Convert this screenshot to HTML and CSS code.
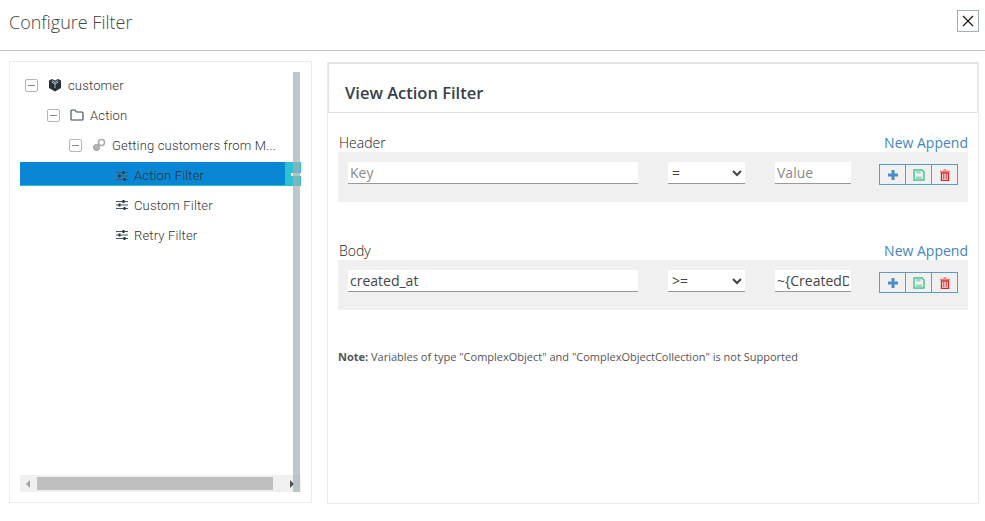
FILE: index.html
```html
<!DOCTYPE html>
<html>
  <head>
    <title>Configure Filter</title>
    <link rel="stylesheet" href="styles.css">
  </head>
  <body>
    <div class="modal-header">
      <h1>Configure Filter</h1>
      <button class="close-btn" type="button" aria-label="Close">
        <svg width="12" height="12" viewBox="0 0 12 12"><path d="M1 1l10 10M11 1L1 11" stroke="#222" stroke-width="1.400" fill="none"/></svg>
      </button>
    </div>

    <div class="modal-body">
      <div class="tree-panel">
        <div class="tree">
          <div class="tree-row level-0">
            <span class="toggle"></span>
            <svg class="node-icon" width="14" height="14" viewBox="0 0 14 14"><path d="M1 2.500L4 1l3 1.500L10 1l3 1.500V10l-6 3.500L1 10z" fill="#263238"/><path d="M3.500 4L7 6l3.500-2M7 6v4M4 2.500L7 4.500l3-2" stroke="#cfd8dc" stroke-width=".8" fill="none"/></svg>
            <span class="node-label">customer</span>
          </div>
          <div class="tree-row level-1">
            <span class="toggle"></span>
            <svg class="node-icon" width="14" height="14" viewBox="0 0 14 14"><path d="M1 11.500V3a1 1 0 0 1 1-1h3l1.500 2H12a1 1 0 0 1 1 1v6.500a.5.5 0 0 1-.5.5h-11a.5.5 0 0 1-.5-.5z" fill="none" stroke="#37474f" stroke-width="1.100"/></svg>
            <span class="node-label">Action</span>
          </div>
          <div class="tree-row level-2">
            <span class="toggle"></span>
            <svg class="node-icon" width="14" height="14" viewBox="0 0 14 14"><circle cx="9.500" cy="4.500" r="3" fill="none" stroke="#aaa" stroke-width="1.500"/><circle cx="4.500" cy="9.500" r="3" fill="#b5b5b5" stroke="#999" stroke-width="1"/></svg>
            <span class="node-label">Getting customers from M...</span>
          </div>
          <div class="tree-row level-3 selected">
            <svg class="node-icon" width="12" height="10" viewBox="0 0 12 10"><path d="M0 1.500h12M0 5h12M0 8.500h12" stroke="#455a64" stroke-width="1.200"/><path d="M7.500 0v3M3.500 3.500v3M8.500 7v3" stroke="#263238" stroke-width="2"/></svg>
            <span class="node-label">Action Filter</span>
          </div>
          <div class="tree-row level-3">
            <svg class="node-icon" width="12" height="10" viewBox="0 0 12 10"><path d="M0 1.500h12M0 5h12M0 8.500h12" stroke="#455a64" stroke-width="1.200"/><path d="M7.500 0v3M3.500 3.500v3M8.500 7v3" stroke="#263238" stroke-width="2"/></svg>
            <span class="node-label">Custom Filter</span>
          </div>
          <div class="tree-row level-3">
            <svg class="node-icon" width="12" height="10" viewBox="0 0 12 10"><path d="M0 1.500h12M0 5h12M0 8.500h12" stroke="#455a64" stroke-width="1.200"/><path d="M7.500 0v3M3.500 3.500v3M8.500 7v3" stroke="#263238" stroke-width="2"/></svg>
            <span class="node-label">Retry Filter</span>
          </div>
        </div>

        <div class="resize-handle"><span></span></div>
        <div class="hscroll">
          <span class="arrow arrow-left"></span>
          <div class="hscroll-thumb"></div>
          <span class="arrow arrow-right"></span>
        </div>
        <div class="vscroll"></div>
      </div>

      <div class="detail-panel">
        <div class="detail-title"><h2>View Action Filter</h2></div>

        <div class="filter-section">
          <div class="section-head">
            <span class="section-name">Header</span>
            <a class="append-link" href="#">New Append</a>
          </div>
          <div class="filter-row">
            <input class="key-input" type="text" placeholder="Key" />
            <select class="op-select"><option>=</option></select>
            <input class="value-input" type="text" placeholder="Value" />
            <div class="btn-group">
              <button type="button" aria-label="Add"><svg width="12" height="12" viewBox="0 0 12 12"><path d="M6 1v10M1 6h10" stroke="#4a8cc7" stroke-width="3"/></svg></button>
              <button type="button" aria-label="Save"><svg width="12" height="12" viewBox="0 0 12 12"><path d="M1 1h8l2 2v8H1z" fill="none" stroke="#3fbf8f" stroke-width="1.400"/><path d="M3.500 1.500h4v3h-4zM3 7.500h6v3H3z" fill="#8fdcc0"/></svg></button>
              <button type="button" aria-label="Delete"><svg width="12" height="12" viewBox="0 0 12 12"><path d="M1 2.500h10" stroke="#e58080" stroke-width="1.500"/><path d="M4.500 1h3" stroke="#e58080" stroke-width="1.500"/><path d="M2.500 4h7v7.500h-7z" fill="none" stroke="#d9242b" stroke-width="1.400"/><path d="M4.800 5v5M7.200 5v5" stroke="#d9242b" stroke-width="1"/></svg></button>
            </div>
          </div>
        </div>

        <div class="filter-section">
          <div class="section-head">
            <span class="section-name">Body</span>
            <a class="append-link" href="#">New Append</a>
          </div>
          <div class="filter-row">
            <input class="key-input" type="text" value="created_at" />
            <select class="op-select"><option>&gt;=</option></select>
            <input class="value-input" type="text" value="~{CreatedDate}" />
            <div class="btn-group">
              <button type="button" aria-label="Add"><svg width="12" height="12" viewBox="0 0 12 12"><path d="M6 1v10M1 6h10" stroke="#4a8cc7" stroke-width="3"/></svg></button>
              <button type="button" aria-label="Save"><svg width="12" height="12" viewBox="0 0 12 12"><path d="M1 1h8l2 2v8H1z" fill="none" stroke="#3fbf8f" stroke-width="1.400"/><path d="M3.500 1.500h4v3h-4zM3 7.500h6v3H3z" fill="#8fdcc0"/></svg></button>
              <button type="button" aria-label="Delete"><svg width="12" height="12" viewBox="0 0 12 12"><path d="M1 2.500h10" stroke="#e58080" stroke-width="1.500"/><path d="M4.500 1h3" stroke="#e58080" stroke-width="1.500"/><path d="M2.500 4h7v7.500h-7z" fill="none" stroke="#d9242b" stroke-width="1.400"/><path d="M4.800 5v5M7.200 5v5" stroke="#d9242b" stroke-width="1"/></svg></button>
            </div>
          </div>
        </div>

        <p class="note"><b>Note:</b> Variables of type "ComplexObject" and "ComplexObjectCollection" is not Supported</p>
      </div>
    </div>
  </body>
</html>
```

FILE: styles.css
```css
html,
body {
  height: 100%;
}
body {
  margin: 0;
  background: #fff;
  font-family: "Open Sans", sans-serif;
  color: #333;
  overflow: hidden;
}
.modal-header {
  height: 51px;
  box-sizing: border-box;
  border-bottom: 1px solid #c4c4c4;
  padding: 10px 6px 0 9px;
  display: flex;
  justify-content: space-between;
  align-items: flex-start;
}
.modal-header h1 {
  margin: 0;
  font-size: 18px;
  font-weight: 300;
  line-height: 25px;
  color: #444;
}
.close-btn {
  width: 22px;
  height: 22px;
  padding: 0;
  background: #fff;
  border: 1px solid #9fb0bc;
  display: flex;
  align-items: center;
  justify-content: center;
}
.modal-body {
  display: flex;
  gap: 15px;
  padding: 10px 6px 0 9px;
  height: 442px;
}
.tree-panel {
  position: relative;
  width: 303px;
  box-sizing: border-box;
  border: 1px solid #e8edf0;
  padding: 8px 10px;
}
.tree-row {
  display: flex;
  align-items: center;
  height: 24px;
  margin-bottom: 6px;
  font-family: "Roboto", sans-serif;
  font-size: 13px;
  font-weight: 300;
  letter-spacing: 0.16px;
  color: #333;
}
.level-0 {
  padding-left: 5px;
  margin-top: 3px;
}
.level-1 {
  padding-left: 27px;
}
.level-2 {
  padding-left: 49px;
}
.level-3 {
  padding-left: 96px;
}
.toggle {
  position: relative;
  width: 11px;
  height: 11px;
  border: 1px solid #b5b5b5;
  border-radius: 2px;
  margin-right: 10px;
}
.toggle::after {
  content: "";
  position: absolute;
  left: 2px;
  right: 2px;
  top: 5px;
  height: 1px;
  background: #888;
}
.node-icon {
  margin-right: 6px;
  flex: none;
}
.selected {
  background: #0987d4;
  border-bottom: 1px solid #2bbfd6;
  width: 265px;
  box-sizing: border-box;
  margin-top: -1px;
  margin-bottom: 7px;
  padding-top: 4px;
  color: #263238;
}
.vscroll {
  position: absolute;
  left: 283px;
  top: 10px;
  width: 7px;
  height: 420px;
  background: rgba(160, 176, 178, 0.7);
}
.resize-handle {
  position: absolute;
  left: 275px;
  top: 100px;
  width: 16px;
  height: 24px;
  background: #2fc0d2;
  display: flex;
  align-items: center;
  justify-content: flex-end;
}
.resize-handle span {
  width: 10px;
  height: 3px;
  background: repeating-linear-gradient(90deg, #f2f5f5 0 2px, #b9dfe2 2px 3px);
}
.hscroll {
  position: absolute;
  left: 10px;
  top: 413px;
  width: 281px;
  height: 17px;
  background: #f0f0f0;
  box-sizing: border-box;
  padding: 2px 0;
  display: flex;
  align-items: center;
}
.hscroll-thumb {
  width: 236px;
  height: 13px;
  background: #bfbfbf;
  margin-left: 7px;
}
.arrow {
  width: 0;
  height: 0;
  border-top: 4px solid transparent;
  border-bottom: 4px solid transparent;
}
.arrow-left {
  border-right: 4px solid #a3a3a3;
  margin-left: 6px;
}
.arrow-right {
  border-left: 4px solid #505050;
  margin-left: 17px;
}
.detail-panel {
  flex: 1;
  border: 1px solid #e8edf0;
  border-top: none;
  padding: 0 10px;
  margin-top: 1px;
  height: 442px;
  box-sizing: border-box;
}
.detail-title {
  margin: 0 -10px;
  height: 51px;
  box-sizing: border-box;
  border: 1px solid #e0e4e6;
  border-width: 2px 1px 1px 1px;
  padding: 18px 16px 0;
}
.detail-title h2 {
  margin: 0;
  font-size: 16.5px;
  font-weight: 600;
  line-height: 22px;
  color: #37404a;
}
.filter-section {
  margin-top: 20px;
}
.filter-section + .filter-section {
  margin-top: 39px;
}
.section-head {
  display: flex;
  justify-content: space-between;
  align-items: flex-end;
  height: 19px;
}
.section-name {
  font-size: 14px;
  font-weight: 300;
  line-height: 19px;
  color: #222;
  padding-left: 1px;
}
.append-link {
  font-size: 14px;
  line-height: 19px;
  color: #3f85c2;
  text-decoration: none;
}
.filter-row {
  display: flex;
  align-items: flex-start;
  height: 50px;
  box-sizing: border-box;
  background: #f0f0f0;
  padding: 10px 10px;
}
input,
select {
  font-family: "Open Sans", sans-serif;
  font-size: 14px;
  color: #444;
  box-sizing: border-box;
  height: 22px;
  border: none;
  border-bottom: 1px solid #999;
  background: #fff;
  border-radius: 0;
  outline: none;
  padding: 0 2px;
}
input::placeholder {
  color: #8a8a8a;
}
.key-input {
  width: 290px;
}
.op-select {
  width: 77px;
  margin-left: 30px;
  padding-left: 0;
}
.value-input {
  width: 76px;
  margin-left: 30px;
}
.btn-group {
  display: flex;
  margin-left: 29px;
  margin-top: 2px;
}
.btn-group button {
  width: 27px;
  height: 21px;
  margin-left: -1px;
  padding: 0;
  background: transparent;
  border: 1px solid #5b9bd1;
  display: flex;
  align-items: center;
  justify-content: center;
}
.note {
  margin: 40px 0 0;
  font-size: 11px;
  line-height: 14px;
  color: #555;
}
```
